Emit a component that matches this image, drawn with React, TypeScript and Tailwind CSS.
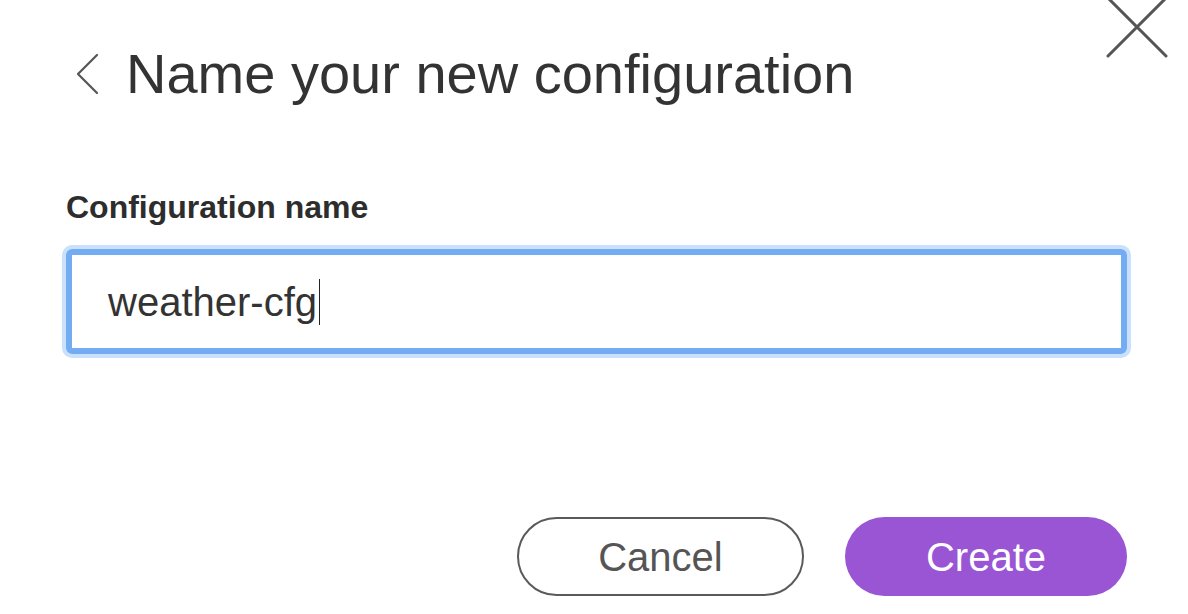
import React from "react";

export default function App() {
  return (
    <div
      className="relative w-[1188px] h-[614px] overflow-hidden bg-white"
      style={{ fontFamily: '"Liberation Sans", Arial, sans-serif' }}
    >
      <button className="absolute left-[1104px] top-[-6px] w-[66px] h-[66px]" aria-label="Close">
        <svg width="66" height="66" viewBox="0 0 66 66">
          <path d="M4 4 L62 62 M62 4 L4 62" stroke="#555" strokeWidth="3" strokeLinecap="round" />
        </svg>
      </button>

      <div className="flex flex-col pl-[66px] pr-[61px]">
        <div className="flex items-center mt-[46px] h-[56px]">
          <svg width="24" height="42" viewBox="0 0 24 42" className="ml-[9px] shrink-0">
            <path d="M22 2 L3 21 L22 40" stroke="#555" strokeWidth="2.2" fill="none" strokeLinecap="round" strokeLinejoin="round" />
          </svg>
          <h1 className="ml-[27px] text-[56px] leading-[56px] text-[#333]">Name your new configuration</h1>
        </div>

        <label className="mt-[90px] text-[32px] leading-[30px] font-bold text-[#2d2d2d]">
          Configuration name
        </label>

        <div className="mt-[27px] h-[105px] rounded-[6px] border-[6px] border-[#74acf3] shadow-[0_0_0_4px_#c9e1fb] flex items-center pl-[36px]">
          <span className="text-[40px] leading-[48px] text-[#333]">weather-cfg</span>
          <span className="ml-[2px] w-[1.5px] h-[46px] bg-[#222]" />
        </div>

        <div className="mt-[163px] flex justify-end gap-[41px]">
          <button className="w-[287px] h-[79px] rounded-full border-2 border-[#5a5a5a] text-[40px] text-[#555] flex items-center justify-center">
            Cancel
          </button>
          <button className="w-[282px] h-[79px] rounded-full bg-[#9955d4] text-[40px] text-white flex items-center justify-center">
            Create
          </button>
        </div>
      </div>
    </div>
  );
}
